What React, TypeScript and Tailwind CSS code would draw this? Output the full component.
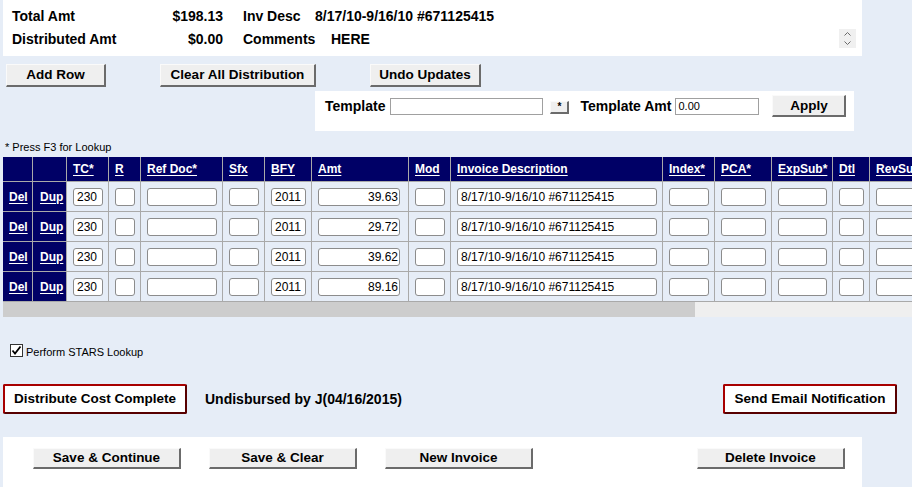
import React from 'react';

const grayBtn =
  'flex items-center justify-center bg-[#efefef] border border-[#fafafa] border-b-2 border-r-2 border-b-[#6b6b6b] border-r-[#6b6b6b] text-[13.5px] font-bold text-black leading-none';

const redBtn =
  'flex items-center justify-center rounded-[2px] bg-white border-2 border-[#a80000] border-b-[#580000] border-r-[#580000] text-[13.5px] font-bold text-black leading-none';

const inputCls =
  'h-[18px] rounded-[3px] border border-[#8c8c8c] bg-white px-[3px] text-[12px] leading-none text-black outline-none';

const cellCls = 'flex items-center border-b border-r border-[#a9a9a9] pl-[6px]';
const gridCols =
  'grid grid-cols-[30px_34px_42px_32px_82px_42px_47px_97px_42px_212px_52px_57px_61px_37px_70px_52px]';

type Col = { label: string; input: string; value?: string; amount?: boolean };

const cols: Col[] = [
  { label: 'TC*', input: 'w-[30px]', value: '230' },
  { label: 'R', input: 'w-[20px]' },
  { label: 'Ref Doc*', input: 'w-[70px]' },
  { label: 'Sfx', input: 'w-[30px]' },
  { label: 'BFY', input: 'w-[35px]', value: '2011' },
  { label: 'Amt', input: 'w-[82px]', amount: true },
  { label: 'Mod', input: 'w-[30px]' },
  { label: 'Invoice Description', input: 'w-[200px]', value: '8/17/10-9/16/10 #671125415' },
  { label: 'Index*', input: 'w-[40px]' },
  { label: 'PCA*', input: 'w-[45px]' },
  { label: 'ExpSub*', input: 'w-[49px]' },
  { label: 'Dtl', input: 'w-[25px]' },
  { label: 'RevSub*', input: 'w-[58px]' },
  { label: 'Fund', input: 'w-[40px]' },
];

const amounts = ['39.63', '29.72', '39.62', '89.16'];

function ScrollArrows() {
  return (
    <div className="ml-auto mr-[6px] mt-[1px] flex h-[19px] w-[17px] flex-col items-center justify-between bg-[#f0f0f0] py-[3px]">
      <svg width="7" height="4" viewBox="0 0 7 4">
        <path d="M0.5 3.5 L3.5 0.5 L6.5 3.5" fill="none" stroke="#6a6a6a" strokeWidth="1" />
      </svg>
      <svg width="7" height="4" viewBox="0 0 7 4">
        <path d="M0.5 0.5 L3.5 3.5 L6.5 0.5" fill="none" stroke="#6a6a6a" strokeWidth="1" />
      </svg>
    </div>
  );
}

function DistributionTable() {
  return (
    <div className="ml-[3px] mt-[3px] w-[909px] overflow-hidden">
      <div className="w-[1000px]">
        <div className={`${gridCols} h-[25px]`}>
          <div className="border-b border-r border-[#a9a9a9] bg-[#000066]" />
          <div className="border-b border-r border-[#a9a9a9] bg-[#000066]" />
          {cols.map((c) => (
            <div key={c.label} className={`${cellCls} bg-[#000066]`}>
              <span className="whitespace-nowrap text-[12px] font-bold text-white underline underline-offset-[2px]">
                {c.label}
              </span>
            </div>
          ))}
        </div>
        {amounts.map((amt, r) => (
          <div key={`row-${r}`} className={`${gridCols} h-[30px]`}>
            <div className={`${cellCls} bg-[#000066]`}>
              <span className="text-[12px] font-bold text-white underline underline-offset-[2px]">Del</span>
            </div>
            <div className={`${cellCls} bg-[#000066] pl-[7px]`}>
              <span className="text-[12px] font-bold text-white underline underline-offset-[2px]">Dup</span>
            </div>
            {cols.map((c) => (
              <div key={c.label} className={cellCls}>
                <input
                  className={`${inputCls} ${c.input} ${c.amount ? 'pr-[1px] text-right' : ''}`}
                  defaultValue={c.amount ? amt : c.value ?? ''}
                />
              </div>
            ))}
          </div>
        ))}
      </div>
    </div>
  );
}

export default function App() {
  return (
    <div className="h-[487px] w-[912px] overflow-hidden bg-[#e6edf7] font-['Liberation_Sans',Arial,sans-serif] text-black">
      {/* summary */}
      <div className="ml-[3px] h-[56px] w-[859px] bg-white pl-[9px] pt-[5px] text-[14px] font-bold">
        <div className="flex h-[23px] items-center leading-[23px]">
          <span className="w-[150px]">Total Amt</span>
          <span className="w-[61px] text-right">$198.13</span>
          <span className="ml-[20px] w-[72px]">Inv Desc</span>
          <span>8/17/10-9/16/10 #671125415</span>
        </div>
        <div className="flex h-[23px] items-start leading-[23px]">
          <span className="w-[150px]">Distributed Amt</span>
          <span className="w-[61px] text-right">$0.00</span>
          <span className="ml-[20px] w-[72px]">Comments</span>
          <span className="ml-[16px]">HERE</span>
          <ScrollArrows />
        </div>
      </div>

      <div className="mt-[8px] flex h-[23px]">
        <button className={`${grayBtn} ml-[6px] w-[100px]`}>Add Row</button>
        <button className={`${grayBtn} ml-[54px] w-[156px]`}>Clear All Distribution</button>
        <button className={`${grayBtn} ml-[54px] w-[111px]`}>Undo Updates</button>
      </div>

      <div className="ml-[315px] mt-[4px] h-[40px] w-[539px] bg-white pl-[10px] pt-[4px]">
        <div className="flex h-[22px] items-center text-[14px] font-bold">
          <span>Template</span>
          <input className="ml-[5px] h-[17px] w-[153px] border border-[#a0a0a0] bg-white outline-none" />
          <button className="ml-[7px] mt-[3px] flex h-[13px] w-[19px] items-end justify-center border border-[#fafafa] border-b-2 border-r-2 border-b-[#6b6b6b] border-r-[#6b6b6b] bg-[#efefef] text-[10px] leading-[10px] font-bold">
            *
          </button>
          <span className="ml-[11px]">Template Amt</span>
          <input
            className="ml-[4px] h-[17px] w-[84px] border border-[#a0a0a0] bg-white pl-[2px] text-[11px] font-normal outline-none"
            defaultValue="0.00"
          />
          <button className={`${grayBtn} ml-[13px] h-[22px] w-[74px]`}>Apply</button>
        </div>
      </div>

      <p className="ml-[5px] mt-[10px] text-[11px] leading-[13px]">* Press F3 for Lookup</p>

      <DistributionTable />

      <div className="ml-[3px] flex h-[15px] w-[909px] bg-[#efefef]">
        <div className="h-full w-[692px] bg-[#cdcdcd]" />
      </div>

      <div className="ml-[10px] mt-[26px] flex h-[14px] items-center">
        <span className="flex h-[13px] w-[13px] items-center justify-center border border-[#333] bg-white">
          <svg width="11" height="11" viewBox="0 0 11 11">
            <path d="M1.5 5.5 L4 8.5 L9.5 1.5" fill="none" stroke="#000" strokeWidth="1.8" />
          </svg>
        </span>
        <span className="ml-[3px] mt-[5px] text-[11px]">Perform STARS Lookup</span>
      </div>

      <div className="mt-[27px] flex h-[30px] items-center">
        <button className={`${redBtn} ml-[3px] h-[30px] w-[184px]`}>Distribute Cost Complete</button>
        <span className="ml-[18px] text-[14px] font-bold">Undisbursed by J(04/16/2015)</span>
        <button className={`${redBtn} ml-auto mr-[15px] h-[30px] w-[174px]`}>Send Email Notification</button>
      </div>

      <div className="ml-[3px] mt-[23px] flex h-[50px] w-[859px] items-start bg-white pt-[11px]">
        <button className={`${grayBtn} ml-[30px] h-[21px] w-[148px]`}>Save &amp; Continue</button>
        <button className={`${grayBtn} ml-[28px] h-[21px] w-[148px]`}>Save &amp; Clear</button>
        <button className={`${grayBtn} ml-[28px] h-[21px] w-[148px]`}>New Invoice</button>
        <button className={`${grayBtn} ml-[164px] h-[21px] w-[148px]`}>Delete Invoice</button>
      </div>
    </div>
  );
}
